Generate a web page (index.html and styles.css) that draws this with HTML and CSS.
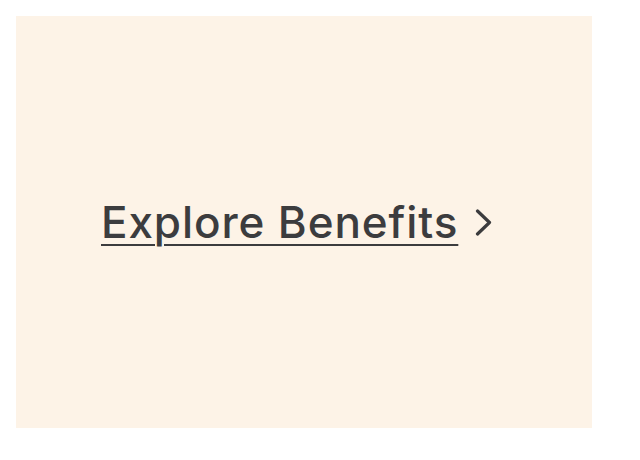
FILE: index.html
```html
<!DOCTYPE html>
<html lang="en">
<head>
<meta charset="utf-8">
<title>Explore Benefits</title>
<link rel="stylesheet" href="styles.css">
</head>
<body>
<section class="panel">
  <a class="cta" href="#">
    <span class="cta-label">Explore Benefits</span>
    <svg class="cta-chevron" width="17" height="27" viewBox="0 0 17 27" aria-hidden="true">
      <path d="M2.5 2 L14.5 13.5 L2.5 25" fill="none" stroke="currentColor" stroke-width="3.2" stroke-linecap="round" stroke-linejoin="round"/>
    </svg>
  </a>
</section>
</body>
</html>
```

FILE: styles.css
```css
html, body {
  margin: 0;
  padding: 0;
  background: #ffffff;
}

body {
  padding: 16px;
  width: 576px;
}

.panel {
  height: 412px;
  background: #fdf3e7;
  display: flex;
  align-items: center;
  padding-left: 85px;
  box-sizing: border-box;
}

.cta {
  display: inline-flex;
  align-items: center;
  gap: 17px;
  color: #3c3c3e;
  text-decoration: none;
  font-family: Inter, "Noto Sans", sans-serif;
}

.cta-label {
  font-size: 44px;
  font-weight: 500;
  letter-spacing: 0.9px;
  text-decoration: underline;
  text-decoration-thickness: 2px;
  text-underline-offset: 6px;
}

.cta-chevron {
  display: block;
}
```
